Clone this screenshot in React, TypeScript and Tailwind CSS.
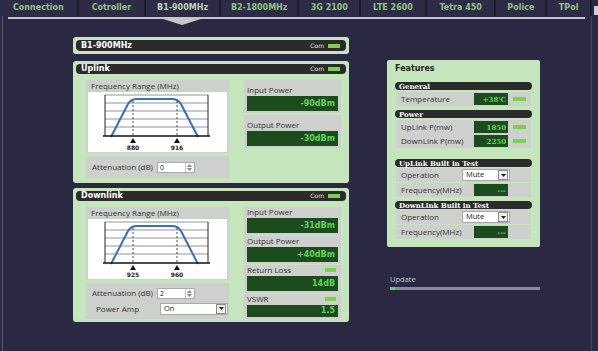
import React from "react";

type Tab = { name: string; w: string; active?: boolean };

const tabs: Tab[] = [
  { name: "Connection", w: "w-[77px]" },
  { name: "Cotroller", w: "w-[66px]" },
  { name: "B1-900MHz", w: "w-[73px]", active: true },
  { name: "B2-1800MHz", w: "w-[77px]" },
  { name: "3G 2100", w: "w-[60px]" },
  { name: "LTE 2600", w: "w-[64px]" },
  { name: "Tetra 450", w: "w-[68px]" },
  { name: "Police", w: "w-[49px]" },
  { name: "TPol", w: "w-[43px]" },
];

const Led = ({ w = "w-[12px]" }: { w?: string }) => (
  <span className={`block ${w} h-[4px] bg-[#7ad14c]`} />
);

const HeaderBar = ({ title, com = true, h = "h-[10px]" }: { title: string; com?: boolean; h?: string }) => (
  <div className={`${h} rounded-[4px] bg-[#2b2b2b] flex items-center justify-between pl-[5px] pr-[6px]`}>
    <span className="text-white font-bold text-[8px] leading-none font-['DejaVu_Sans']">{title}</span>
    {com && (
      <span className="flex items-center gap-[4px] text-[6px] leading-none text-[#e0e0e0] font-['DejaVu_Sans']">
        Com <Led />
      </span>
    )}
  </div>
);

const Chart = ({ a, b }: { a: string; b: string }) => (
  <svg width="138" height="59" viewBox="0 0 138 59">
    {[3, 11, 19, 27, 35].map((y) => (
      <line key={y} x1="17" x2="120" y1={y} y2={y} stroke="#7a7a7a" strokeWidth="0.8" />
    ))}
    <line x1="17" x2="17" y1="3" y2="44" stroke="#222" strokeWidth="1" />
    <line x1="120" x2="120" y1="3" y2="44" stroke="#222" strokeWidth="1" />
    <path d="M23 45 L40 12 Q43 7 49 7 L84 7 Q90 7 93 12 L110 45" fill="none" stroke="#3d6db3" strokeWidth="2" />
    <line x1="15" x2="122" y1="44" y2="44" stroke="#111" strokeWidth="1.6" />
    <line x1="45" x2="45" y1="9" y2="45" stroke="#222" strokeWidth="0.8" strokeDasharray="2 2" />
    <line x1="89" x2="89" y1="9" y2="45" stroke="#222" strokeWidth="0.8" strokeDasharray="2 2" />
    <polygon points="42,51 45,46 48,51" fill="#111" />
    <polygon points="86,51 89,46 92,51" fill="#111" />
    <text x="45" y="58" textAnchor="middle" fontSize="6" fontWeight="bold" fontFamily="DejaVu Sans" fill="#222">{a}</text>
    <text x="89" y="58" textAnchor="middle" fontSize="6" fontWeight="bold" fontFamily="DejaVu Sans" fill="#222">{b}</text>
  </svg>
);

const Spin = ({ value }: { value: string }) => (
  <div className="w-[38px] h-[11px] bg-white border border-[#a9a9a9] flex items-center">
    <span className="flex-1 pl-[2px] text-[7px] leading-none text-[#222]">{value}</span>
    <span className="w-[9px] h-full border-l border-[#c4c4c4] flex flex-col items-center justify-center gap-[1px]">
      <svg width="5" height="3" viewBox="0 0 5 3"><polygon points="0,3 2.5,0 5,3" fill="#888" /></svg>
      <svg width="5" height="3" viewBox="0 0 5 3"><polygon points="0,0 2.5,3 5,0" fill="#888" /></svg>
    </span>
  </div>
);

const Select = ({ value, w }: { value: string; w: string }) => (
  <div className={`${w} h-[12px] bg-white border border-[#a9a9a9] flex items-center`}>
    <span className="flex-1 pl-[3px] text-[7.5px] leading-none text-[#222]">{value}</span>
    <span className="w-[10px] h-[10px] mr-[1px] border border-[#8a8a8a] bg-[#efefef] flex items-center justify-center">
      <svg width="5" height="3" viewBox="0 0 5 3"><polygon points="0,0 2.5,3 5,0" fill="#222" /></svg>
    </span>
  </div>
);

const PowerBox = ({
  label,
  value,
  led,
  box,
}: {
  label: string;
  value: string;
  led?: boolean;
  box: string;
}) => (
  <div className={`${box} bg-[#cdd0cc] px-[3px] flex flex-col justify-end pb-[2px]`}>
    <div className="flex items-center justify-between pr-[2px] pb-[1px]">
      <span className="text-[8px] leading-[10px] text-[#333]">{label}</span>
      {led && <Led w="w-[11px]" />}
    </div>
    <div className="h-[15px] bg-[#1c4b1e] flex items-center justify-end pr-[3px]">
      <span className="text-[8px] font-bold leading-none text-[#63d35a] font-['DejaVu_Sans']">{value}</span>
    </div>
  </div>
);

const FreqPanel = ({ a, b }: { a: string; b: string }) => (
  <div className="bg-[#cdd0cc] pb-[1px]">
    <div className="h-[12px] flex items-center pl-[5px] text-[8px] leading-none text-[#333]">
      Frequency Range (MHz)
    </div>
    <div className="ml-[2px] w-[139px] h-[60px] bg-white">
      <Chart a={a} b={b} />
    </div>
  </div>
);

const SectionBar = ({ title }: { title: string }) => (
  <div className="h-[8px] rounded-[4px] bg-[#2b2b2b] flex items-center pl-[4px]">
    <span className="text-white font-bold text-[7px] leading-none font-['DejaVu_Serif']">{title}</span>
  </div>
);

const Row = ({ label, children, mt = "mt-[1px]" }: { label: string; children?: React.ReactNode; mt?: string }) => (
  <div className={`${mt} mx-[1px] h-[14px] bg-[#cdd0cc] flex items-center pl-[5px] pr-[5px]`}>
    <span className="w-[73px] text-[8px] leading-none text-[#333]">{label}</span>
    {children}
  </div>
);

const Val = ({ v }: { v: string }) => (
  <span className="w-[34px] h-[12px] bg-[#1c4b1e] flex items-center justify-end pr-[2px] text-[7px] font-bold leading-none text-[#63d35a] font-['DejaVu_Serif']">
    {v}
  </span>
);

export default function App() {
  return (
    <div className="w-[598px] h-[351px] bg-[#2a2842] relative overflow-hidden font-['Open_Sans',sans-serif]">
      <div className="h-[16px] flex bg-[#1c1a2c] gap-[2px]">
        {tabs.map((t) => (
          <div
            key={t.name}
            className={`${t.w} relative bg-[#2e2b46] flex items-center justify-center text-[8px] font-bold font-['DejaVu_Sans'] ${
              t.active ? "text-[#bcd6b4] items-start pt-[2px]" : "text-[#8fc57e]"
            }`}
          >
            {t.name}
            {t.active && (
              <svg className="absolute left-[14px] top-[18px]" width="44" height="7" viewBox="0 0 44 7">
                <polygon points="0,0 44,0 22,7" fill="#c7c7cd" />
              </svg>
            )}
          </div>
        ))}
        <div className="flex-1 bg-[#2a2842] pt-[6px] pl-[2px]">
          <div className="w-[4px] h-[9px] bg-[#d0d0d4]" />
        </div>
      </div>
      <div className="absolute left-[2px] top-[16px] bottom-0 w-[1px] bg-[#5b5972]" />
      <div className="absolute right-[6px] top-[16px] bottom-0 w-[1px] bg-[#46445c]" />
      <div className="ml-[8px] mt-[1px] w-[577px] h-[2px] bg-[#c4c4cc]" />

      <div className="flex pl-[73px] pt-[18px]">
        <div className="w-[276px] flex flex-col">
          <div className="h-[17px] bg-[#c5e6bc] rounded-[3px] p-[3px]">
            <HeaderBar title="B1-900MHz" h="h-[11px]" />
          </div>

          <div className="mt-[7px] h-[122px] bg-[#c5e6bc] rounded-[3px] p-[3px]">
            <HeaderBar title="Uplink" />
            <div className="mt-[6px] flex pl-[10px] pr-[5px]">
              <div className="w-[143px]">
                <FreqPanel a="880" b="916" />
                <div className="mt-[3px] h-[22px] bg-[#cdd0cc] flex items-center pl-[6px] gap-[4px]">
                  <span className="text-[8px] leading-none text-[#333]">Attenuation (dB)</span>
                  <Spin value="0" />
                </div>
              </div>
              <div className="ml-auto w-[97px] flex flex-col gap-[2px]">
                <PowerBox label="Input Power" value="-90dBm" box="h-[33px]" />
                <PowerBox label="Output Power" value="-30dBm" box="h-[33px]" />
              </div>
            </div>
          </div>

          <div className="mt-[5px] h-[134px] bg-[#c5e6bc] rounded-[3px] p-[3px]">
            <HeaderBar title="Downlink" />
            <div className="mt-[6px] flex pl-[10px] pr-[5px]">
              <div className="w-[143px]">
                <FreqPanel a="925" b="960" />
                <div className="mt-[3px] h-[36px] bg-[#cdd0cc] flex flex-col justify-center gap-[4px] pl-[6px]">
                  <div className="flex items-center gap-[4px]">
                    <span className="text-[8px] leading-none text-[#333]">Attenuation (dB)</span>
                    <Spin value="2" />
                  </div>
                  <div className="flex items-center">
                    <span className="w-[68px] pl-[4px] text-[8px] leading-none text-[#333]">Power Amp</span>
                    <Select value="On" w="w-[68px]" />
                  </div>
                </div>
              </div>
              <div className="ml-auto w-[97px] flex flex-col gap-[1px]">
                <PowerBox label="Input Power" value="-31dBm" box="h-[28px]" />
                <PowerBox label="Output Power" value="+40dBm" box="h-[28px]" />
                <PowerBox label="Return Loss" value="14dB" led box="h-[28px]" />
                <PowerBox label="VSWR" value="1.5" led box="h-[25px]" />
              </div>
            </div>
          </div>
        </div>

        <div className="ml-[38px] mt-[23px] w-[153px] flex flex-col">
          <div className="h-[187px] bg-[#c5e6bc] rounded-[2px] px-[8px] pt-[5px]">
            <div className="h-[10px] text-[8px] font-bold leading-none text-[#222] font-['DejaVu_Sans']">Features</div>
            <div className="mt-[7px]"><SectionBar title="General" /></div>
            <Row label="Temperature" mt="mt-[2px]">
              <Val v="+38'C" />
              <span className="ml-auto flex"><Led w="w-[13px]" /></span>
            </Row>
            <div className="mt-[4px]"><SectionBar title="Power" /></div>
            <Row label="UpLink P(mw)" mt="mt-[2px]">
              <Val v="1850" />
              <span className="ml-auto flex"><Led w="w-[13px]" /></span>
            </Row>
            <Row label="DownLink P(mw)" mt="mt-[0px]">
              <Val v="2250" />
              <span className="ml-auto flex"><Led w="w-[13px]" /></span>
            </Row>
            <div className="mt-[11px]"><SectionBar title="UpLink Built in Test" /></div>
            <Row label="Operation">
              <span className="-ml-[12px] flex"><Select value="Mute" w="w-[48px]" /></span>
            </Row>
            <Row label="Frequency(MHz)">
              <Val v="---" />
            </Row>
            <div className="mt-[4px]"><SectionBar title="DownLink Built in Test" /></div>
            <Row label="Operation">
              <span className="-ml-[12px] flex"><Select value="Mute" w="w-[48px]" /></span>
            </Row>
            <Row label="Frequency(MHz)">
              <Val v="---" />
            </Row>
          </div>
          <div className="mt-[28px] pl-[3px] text-[7.5px] leading-[9px] text-[#c9c9d2]">Update</div>
          <div className="mt-[3px] ml-[3px] w-[150px] h-[3px] bg-[#8a889e] flex">
            <div className="w-[5px] h-full bg-[#6fd04a]" />
          </div>
        </div>
      </div>
    </div>
  );
}
